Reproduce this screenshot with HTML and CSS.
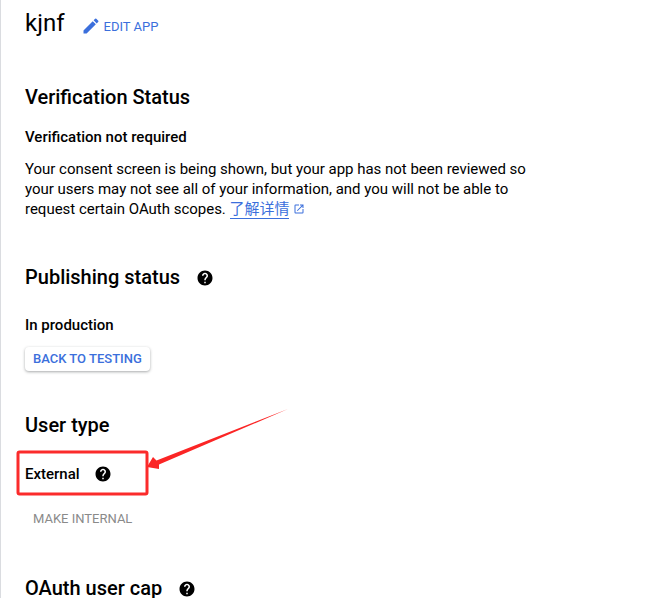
FILE: index.html
```html
<!DOCTYPE html>
<html lang="en">
<head>
    <meta charset="UTF-8">
    <meta name="viewport" content="width=device-width, initial-scale=1.0">
    <title>OAuth consent screen</title>
    <link rel="stylesheet" href="styles.css">
</head>
<body>
    <div class="container">
        <div class="app-header">
            <h1>kjnf</h1>
            <a class="edit-link" href="#">
                <svg class="edit-icon" viewBox="0 0 24 24"><path d="M3 17.25V21h3.75L17.81 9.94l-3.75-3.75L3 17.25zM20.71 7.04a1 1 0 0 0 0-1.41l-2.34-2.34a1 1 0 0 0-1.41 0l-1.83 1.83 3.75 3.75 1.83-1.83z"/></svg>
                EDIT APP
            </a>
        </div>

        <section class="verification">
            <h2>Verification Status</h2>
            <div class="label">Verification not required</div>
            <p>Your consent screen is being shown, but your app has not been reviewed so your users may not see all of your information, and you will not be able to request certain OAuth scopes. <a class="learn-more" href="#">了解详情</a>
                <svg class="open-icon" viewBox="0 0 24 24"><path d="M19 19H5V5h7V3H5a2 2 0 0 0-2 2v14a2 2 0 0 0 2 2h14a2 2 0 0 0 2-2v-7h-2v7zM14 3v2h3.59l-9.83 9.83 1.41 1.41L19 6.41V10h2V3h-7z"/></svg>
            </p>
        </section>

        <section class="publishing">
            <h2>Publishing status
                <svg class="help-icon" viewBox="0 0 24 24"><use href="#help"/></svg>
            </h2>
            <div class="label">In production</div>
            <button class="raised">BACK TO TESTING</button>
        </section>

        <section class="user-type">
            <h2>User type</h2>
            <div class="label">External
                <svg class="help-icon" viewBox="0 0 24 24"><use href="#help"/></svg>
            </div>
            <button class="flat" disabled>MAKE INTERNAL</button>
        </section>

        <section class="user-cap">
            <h2>OAuth user cap
                <svg class="help-icon" viewBox="0 0 24 24"><use href="#help"/></svg>
            </h2>
        </section>
    </div>

    <!-- red annotation drawn on top of the screenshot -->
    <svg class="annotation" viewBox="0 0 668 598">
        <rect x="18" y="452" width="129" height="42" rx="1.5" fill="none" stroke="#fb2b2b" stroke-width="3"/>
        <polygon points="288,409 156.5,460.5 153,457 147,467 159,469 159,464.5" fill="#fb2525"/>
    </svg>

    <svg class="defs" width="0" height="0">
        <symbol id="help" viewBox="0 0 24 24">
            <path d="M12 2C6.48 2 2 6.48 2 12s4.48 10 10 10 10-4.48 10-10S17.52 2 12 2zm1 17h-2v-2h2v2zm2.07-7.75l-.9.92C13.45 12.9 13 13.5 13 15h-2v-.5c0-1.1.45-2.1 1.17-2.83l1.24-1.26c.37-.36.59-.86.59-1.41 0-1.1-.9-2-2-2s-2 .9-2 2H8c0-2.21 1.79-4 4-4s4 1.79 4 4c0 .88-.36 1.68-.93 2.25z"/>
        </symbol>
    </svg>
</body>
</html>
```

FILE: styles.css
```css
html, body {
    margin: 0;
    height: 598px;
    overflow: hidden;
    background-color: #fff;
}
body {
    position: relative;
    font-family: Roboto, "Noto Sans CJK SC", sans-serif;
    color: #000;
}
.container {
    height: 100%;
    box-sizing: border-box;
    border-left: 1px solid #dadce0;
    padding: 8px 0 0 24px;
}
.app-header {
    display: flex;
    align-items: center;
    height: 30px;
}
h1 {
    margin: 0;
    font-size: 24px;
    font-weight: 400;
    line-height: 30px;
}
.edit-link {
    display: flex;
    align-items: center;
    margin-left: 16.5px;
    margin-top: 6px;
    color: #3b6fdc;
    font-size: 13px;
    font-weight: 400;
    text-decoration: none;
}
.edit-icon {
    width: 20px;
    height: 20px;
    margin-right: 2.5px;
    fill: #3b6fdc;
}
h2 {
    display: flex;
    align-items: center;
    margin: 0;
    font-size: 20px;
    font-weight: 500;
    line-height: 24px;
}
h2 .help-icon {
    margin-top: 2px;
    margin-left: 16px;
}
section {
    width: 510px;
}
.verification {
    margin-top: 47px;
}
.label {
    display: flex;
    align-items: center;
    font-size: 15px;
    font-weight: 500;
    line-height: 20px;
}
.verification .label {
    margin-top: 18px;
}
p {
    margin: 12px 0 0;
    font-size: 15px;
    letter-spacing: -0.015px;
    line-height: 20px;
}
.learn-more {
    color: #3b6fdc;
    border-bottom: 1px solid #3b6fdc;
    text-decoration: none;
}
.open-icon {
    width: 12px;
    height: 12px;
    fill: #3b6fdc;
    vertical-align: -1px;
}
.help-icon {
    width: 18px;
    height: 18px;
    margin-left: 14px;
    fill: #000;
}
.publishing {
    margin-top: 46px;
}
.publishing .label {
    margin-top: 26px;
}
.raised {
    display: block;
    margin-top: 12px;
    padding: 0 8px 2px;
    height: 24px;
    border: none;
    border-radius: 4px;
    background-color: #fff;
    box-shadow: 0 1px 3px rgba(60, 64, 67, 0.45);
    color: #3b6fdc;
    font-family: inherit;
    font-size: 13px;
    font-weight: 500;
}
.user-type {
    margin-top: 42px;
}
.user-type .label {
    margin-top: 27px;
}
.flat {
    display: block;
    margin-top: 22px;
    padding: 0 8px;
    height: 24px;
    border: none;
    background: none;
    color: #8a8a8a;
    font-family: inherit;
    font-size: 13px;
    font-weight: 400;
}
.user-cap {
    margin-top: 46px;
}
.annotation {
    position: absolute;
    top: 0;
    left: 0;
    width: 668px;
    height: 598px;
    pointer-events: none;
}
.defs {
    position: absolute;
}
```
